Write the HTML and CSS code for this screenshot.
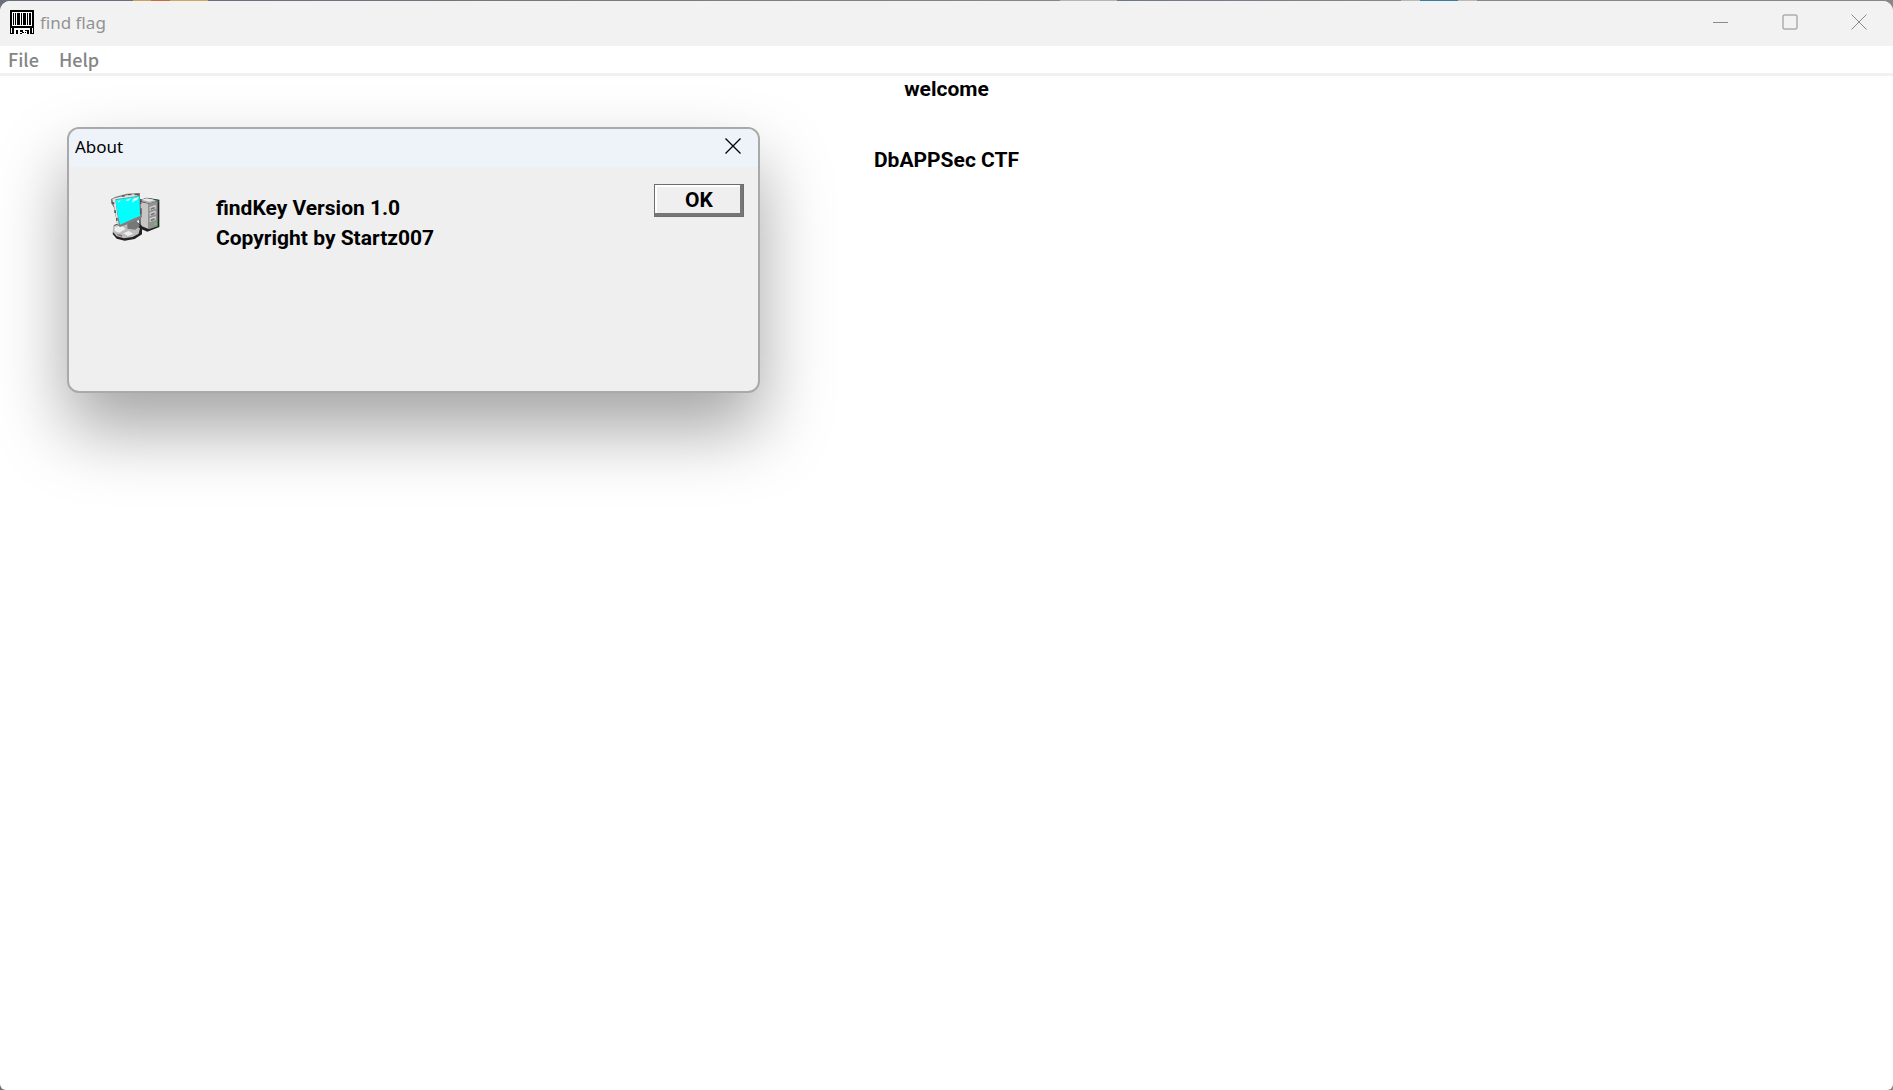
FILE: index.html
```
<!DOCTYPE html>
<html lang="en">
<head>
  <meta charset="UTF-8">
  <meta name="viewport" content="width=device-width, initial-scale=1.0">
  <title>find flag</title>
  <link rel="stylesheet" href="styles.css">
</head>
<body>
  <div class="window">
    <!-- Title bar -->
    <header class="titlebar">
      <svg class="app-icon" viewBox="0 0 24 24" shape-rendering="crispEdges" aria-hidden="true">
        <path fill="#000" d="M0 0h24v24H0z"/>
        <path fill="#fff" d="M2 2h20v14H2z"/>
        <path fill="#000" d="M3 3h1v12H3zM5 3h1v12H5zM7 3h3v12H7zM11 3h1v12h-1zM13 3h3v12h-3zM17 3h1v12h-1zM19 3h2v12h-2z"/>
        <path fill="#fff" d="M1 18h1v5H1zM22 18h1v5h-1zM4 18h16v6H4z"/>
        <path fill="#000" d="M6 20h2v4H6zM10 20h3v2h-3zM12 22h2v1h-2zM10 23h2v1h-2zM15 20h4v1h-4zM17 21h2v3h-2zM15 22h1v1h-1z"/>
      </svg>
      <h1 class="title">find flag</h1>
      <div class="caption-buttons">
        <button class="caption-btn" aria-label="Minimize">
          <svg viewBox="0 0 16 16"><path d="M0 8.500h15"/></svg>
        </button>
        <button class="caption-btn" aria-label="Maximize">
          <svg viewBox="0 0 16 16"><rect x="1" y="1" width="14" height="14" rx="1"/></svg>
        </button>
        <button class="caption-btn" aria-label="Close">
          <svg viewBox="0 0 16 16"><path d="M.5.5l15 15M15.500.5l-15 15"/></svg>
        </button>
      </div>
    </header>

    <!-- Menu -->
    <nav class="menubar">
      <button class="menu-item">File</button>
      <button class="menu-item">Help</button>
    </nav>

    <main class="client">
      <p class="message">welcome</p>
      <p class="message">DbAPPSec CTF</p>
    </main>

    <!-- About dialog -->
    <section class="dialog" role="dialog" aria-labelledby="aboutTitle">
      <header class="dialog-title">
        <h2 id="aboutTitle">About</h2>
        <button class="dialog-close" aria-label="Close">
          <svg viewBox="0 0 16 16"><path d="M.5.5l15 15M15.500.5l-15 15"/></svg>
        </button>
      </header>
      <div class="dialog-body">
        <svg class="computer" viewBox="30 24 150 144" aria-hidden="true">
          <!-- tower -->
          <path fill="#222" d="M118 46l22-8 38 6v82l-36 14-24-10z"/>
          <path fill="#a9a9a9" d="M120 48l20-8 34 7-26 9z"/>
          <path fill="#e8e8e8" d="M124 44l16-4 26 5-18 5z"/>
          <path fill="#c6c6c6" d="M120 50l26 6v76l-24-10z"/>
          <path fill="#929292" d="M146 56l27-8v76l-27 9z"/>
          <path fill="#d6d6d6" d="M149 66l18-6v11l-18 6zM149 83l18-6v11l-18 6zM149 100l18-6v11l-18 6z"/>
          <path fill="#777" d="M152 69l12-4v6l-12 4zM152 86l12-4v6l-12 4zM152 103l12-4v6l-12 4z"/>
          <path fill="#3fe04a" d="M163 114h7v6h-7z"/>
          <path fill="#188" d="M171 47h5v5h-5z"/>
          <!-- base -->
          <path fill="#222" d="M42 120l28-8 36-4 20 14v26l-22 14-30 5-24-6-12-14z"/>
          <path fill="#bdbdbd" d="M40 122l26-6 34 2 20 12-4 16-18 10-26 4-22-6-12-14z"/>
          <path fill="#ededed" d="M44 126l22-5 10 12-18 10-14-5zM70 145l16-7 14 8-16 7z"/>
          <path fill="#777" d="M82 116l28-8 10 14-14 12-24-3zM52 147l14 3v5l-13-4z"/>
          <!-- monitor -->
          <path fill="#808080" d="M33 42l14-7 33-9 40-2v14l6 58-10 10-56 20-8-6-10-52-9-14z"/>
          <path fill="#e4e4e4" d="M37 42l13-4 38-9 24-2v6L46 43l10 76-4-2-9-52z"/>
          <path fill="#555" d="M66 31h8v4h-8zM84 27h10v4H84zM104 26h12v5h-12zM36 52h7v5h-7zM43 76h5v8h-5zM48 99h5v8h-5zM120 42h4v16h-4zM121 70h4v18h-4z"/>
          <path fill="#0ff" d="M46 45l18-3 54-8 2 59-24 10-36 16-6-26z"/>
          <path fill="#d9ffff" d="M79 44l14-5-8 9h-6zM99 42l17-6-5 9-7 2-8 7zM53 47h9l-7 6z"/>
        </svg>
        <div class="about-text">
          <p>findKey Version 1.0</p>
          <p>Copyright by Startz007</p>
        </div>
        <button class="ok-btn">OK</button>
      </div>
    </section>
  </div>
</body>
</html>
```
FILE: styles.css
```
* {
  box-sizing: border-box;
}
body {
  margin: 0;
  padding-top: 1px;
  min-height: 100vh;
  display: flex;
  /* desktop showing behind the window edge */
  background: linear-gradient(90deg,
    #6b6f7c 7%, #c9a25a 7% 8%, #c0703a 8% 9%, #c9a860 9% 11%,
    #6b6f7c 11%, #8a8784 56%, #b8b4b2 56% 59%,
    #6d7590 59%, #8a8784 74%, #bdb8b5 74% 75%,
    #3a7ca8 75% 77%, #bdb8b5 77% 78%, #8a8784 78%);
  font-family: "Noto Sans", sans-serif;
}
h1, h2, p {
  margin: 0;
  font-weight: inherit;
}
button {
  padding: 0;
  border: none;
  background: none;
  font-family: inherit;
}
.window {
  position: relative;
  flex: 1;
  display: flex;
  flex-direction: column;
  overflow: hidden;
  border-radius: 10px 10px 6px 6px;
  background-color: #fff;
}

/* Title bar */
.titlebar {
  display: flex;
  align-items: center;
  height: 45px;
  padding: 0 0 3px 10px;
  background-color: #f2f2f2;
}
.app-icon {
  width: 24px;
  height: 24px;
}
.title {
  flex: 1;
  margin-left: 6px;
  font-size: 17px;
  color: #929292;
}
.caption-buttons {
  display: flex;
  height: 100%;
}
.caption-btn {
  width: 69px;
  color: #8a8a8a;
}
.caption-btn svg,
.dialog-close svg {
  display: block;
  width: 16px;
  height: 16px;
  margin: 0 auto;
  fill: none;
  stroke: currentColor;
}
.dialog-close svg {
  stroke-width: 1.3;
}

/* Menu */
.menubar {
  display: flex;
  gap: 20px;
  height: 30px;
  padding-left: 8px;
  border-bottom: 3px solid #f1f1f1;
}
.menu-item {
  font-family: "Noto Sans CJK SC", sans-serif;
  font-size: 18px;
  font-weight: 500;
  line-height: 27px;
  color: #858585;
}

.client {
  flex: 1;
}
.message {
  height: 71px;
  line-height: 26px;
  text-align: center;
}
.message,
.about-text,
.ok-btn {
  font-family: Roboto, sans-serif;
  font-size: 21px;
  font-weight: bold;
}

/* About dialog */
.dialog {
  position: absolute;
  top: 126px;
  left: 67px;
  width: 693px;
  height: 266px;
  overflow: hidden;
  border: 2px solid #a9a9a9;
  border-radius: 12px;
  background-color: #efefef;
  box-shadow: 0 36px 70px rgba(0, 0, 0, 0.36);
}
.dialog-title {
  display: flex;
  align-items: center;
  justify-content: space-between;
  height: 38px;
  padding: 0 17px 4px 6px;
  background-color: #edf3f8;
}
.dialog-title h2 {
  font-size: 17px;
}
.dialog-close {
  color: #000;
}
.dialog-body {
  display: flex;
  align-items: flex-start;
  padding: 17px 14px 0 41px;
}
.computer {
  width: 50px;
  height: 48px;
  margin-top: 9px;
}
.about-text {
  flex: 1;
  margin: 9px 0 0 56px;
  line-height: 30px;
}
.ok-btn {
  width: 90px;
  height: 33px;
  padding-bottom: 2px;
  border: 1px solid #6e6e6e;
  background-color: #efefef;
  box-shadow: inset -3px -3px #767676, inset 2px 2px #fff;
}
```
